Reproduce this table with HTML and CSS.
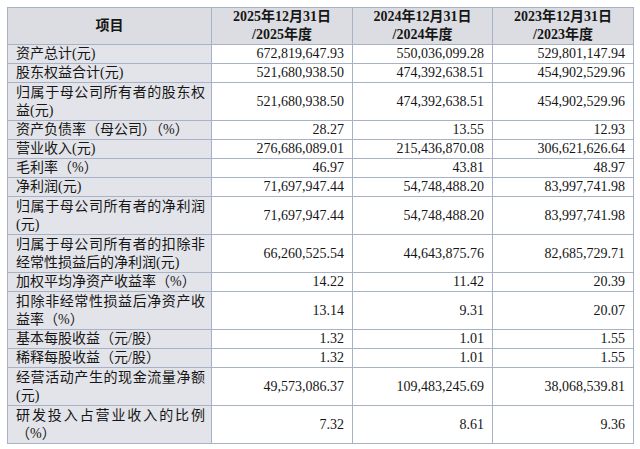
FILE: index.html
```html
<!DOCTYPE html>
<html lang="zh">
<head>
<meta charset="utf-8">
<link rel="stylesheet" href="styles.css">
</head>
<body>
<table class="fin">
  <colgroup>
    <col class="c-item">
    <col class="c-num">
    <col class="c-num2">
    <col class="c-num">
  </colgroup>
  <thead>
    <tr>
      <th class="h-item">项目</th>
      <th>2025年12月31日<br>/2025年度</th>
      <th>2024年12月31日<br>/2024年度</th>
      <th>2023年12月31日<br>/2023年度</th>
    </tr>
  </thead>
  <tbody>
    <tr><td class="lbl">资产总计(元)</td><td>672,819,647.93</td><td>550,036,099.28</td><td>529,801,147.94</td></tr>
    <tr><td class="lbl">股东权益合计(元)</td><td>521,680,938.50</td><td>474,392,638.51</td><td>454,902,529.96</td></tr>
    <tr class="dbl"><td class="lbl">归属于母公司所有者的股东权益(元)</td><td>521,680,938.50</td><td>474,392,638.51</td><td>454,902,529.96</td></tr>
    <tr><td class="lbl">资产负债率（母公司）（%）</td><td>28.27</td><td>13.55</td><td>12.93</td></tr>
    <tr><td class="lbl">营业收入(元)</td><td>276,686,089.01</td><td>215,436,870.08</td><td>306,621,626.64</td></tr>
    <tr><td class="lbl">毛利率（%）</td><td>46.97</td><td>43.81</td><td>48.97</td></tr>
    <tr><td class="lbl">净利润(元)</td><td>71,697,947.44</td><td>54,748,488.20</td><td>83,997,741.98</td></tr>
    <tr class="dbl"><td class="lbl">归属于母公司所有者的净利润(元)</td><td>71,697,947.44</td><td>54,748,488.20</td><td>83,997,741.98</td></tr>
    <tr class="dbl"><td class="lbl">归属于母公司所有者的扣除非经常性损益后的净利润(元)</td><td>66,260,525.54</td><td>44,643,875.76</td><td>82,685,729.71</td></tr>
    <tr><td class="lbl">加权平均净资产收益率（%）</td><td>14.22</td><td>11.42</td><td>20.39</td></tr>
    <tr class="dbl"><td class="lbl">扣除非经常性损益后净资产收益率（%）</td><td>13.14</td><td>9.31</td><td>20.07</td></tr>
    <tr><td class="lbl">基本每股收益（元/股）</td><td>1.32</td><td>1.01</td><td>1.55</td></tr>
    <tr><td class="lbl">稀释每股收益（元/股）</td><td>1.32</td><td>1.01</td><td>1.55</td></tr>
    <tr class="dbl"><td class="lbl">经营活动产生的现金流量净额(元)</td><td>49,573,086.37</td><td>109,483,245.69</td><td>38,068,539.81</td></tr>
    <tr class="dbl"><td class="lbl">研发投入占营业收入的比例（%）</td><td>7.32</td><td>8.61</td><td>9.36</td></tr>
  </tbody>
</table>
</body>
</html>
```

FILE: styles.css
```css
html, body {
  background: #ffffff;
}
body {
  margin: 7px 0 0 7px;
  font-family: "Liberation Serif", "Noto Sans CJK SC", serif;
  font-size: 14px;
  color: #161616;
}
.fin {
  border-collapse: collapse;
  table-layout: fixed;
  width: 627px;
}
.c-item { width: 204px; }
.c-num { width: 141px; }
.c-num2 { width: 140px; }
.fin th,
.fin td {
  border: 1px solid #a7b2c7;
  line-height: 18px;
  padding: 0 8px 0 8px;
  vertical-align: middle;
}
.fin th {
  background: #dcdde2;
  font-weight: bold;
  text-align: center;
  padding: 0 2px;
}
.fin td {
  text-align: right;
  white-space: nowrap;
}
.fin td.lbl {
  background: #e3e4e9;
  text-align: justify;
  white-space: normal;
  padding: 0 6px 0 8px;
}
.fin tr.dbl td {
  padding-top: 1px;
}
```
